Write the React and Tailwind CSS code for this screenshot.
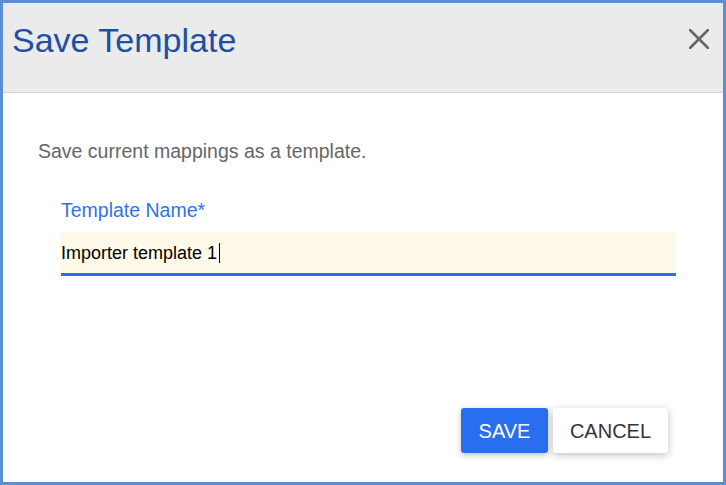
const SaveTemplateDialog = () => {
  return (
    <div
      className="w-[726px] h-[485px] bg-white border-[3px] border-[#5a8fd6] flex flex-col"
      style={{ fontFamily: '"Liberation Sans", Arial, sans-serif' }}
    >
      <div className="h-[90px] bg-[#ebebeb] border-b border-[#d3d3d3] flex items-start justify-between pl-[9px] pr-[14px] pt-[20px] shrink-0">
        <h2 className="text-[34px] text-[#1e4fa6] leading-none">Save Template</h2>
        <svg width="20" height="20" viewBox="0 0 20 20" className="mt-[6px]">
          <path d="M1 1L19 19M19 1L1 19" stroke="#666666" strokeWidth="2.6" strokeLinecap="round" />
        </svg>
      </div>

      <div className="flex-1 flex flex-col px-[35px] pt-[49px]">
        <p className="text-[19.5px] text-[#666666] leading-none">Save current mappings as a template.</p>

        <div className="pl-[23px] pr-[12px] mt-[39px]">
          <label className="block text-[19.5px] text-[#2f74e6] leading-none">Template Name*</label>
          <div className="mt-[12px] h-[44px] bg-[#fef9e8] border-b-[3px] border-[#2a6ee8] flex items-center">
            <span className="text-[18px] text-black leading-none">Importer template 1</span>
            <span className="w-px h-[20px] bg-black ml-[2px]"></span>
          </div>
        </div>

        <div className="flex-1"></div>

        <div className="flex justify-end gap-[5px] pr-[20px] pb-[29px]">
          <button className="h-[45px] w-[87px] bg-[#2a6ef0] text-white text-[20px] rounded-[3px] shadow-[0_2px_6px_rgba(0,0,0,0.25)]">
            SAVE
          </button>
          <button className="h-[45px] w-[115px] bg-white text-[#333333] text-[20px] rounded-[3px] shadow-[0_2px_8px_rgba(0,0,0,0.25)]">
            CANCEL
          </button>
        </div>
      </div>
    </div>
  );
};

export default function App() {
  return <SaveTemplateDialog />;
}
